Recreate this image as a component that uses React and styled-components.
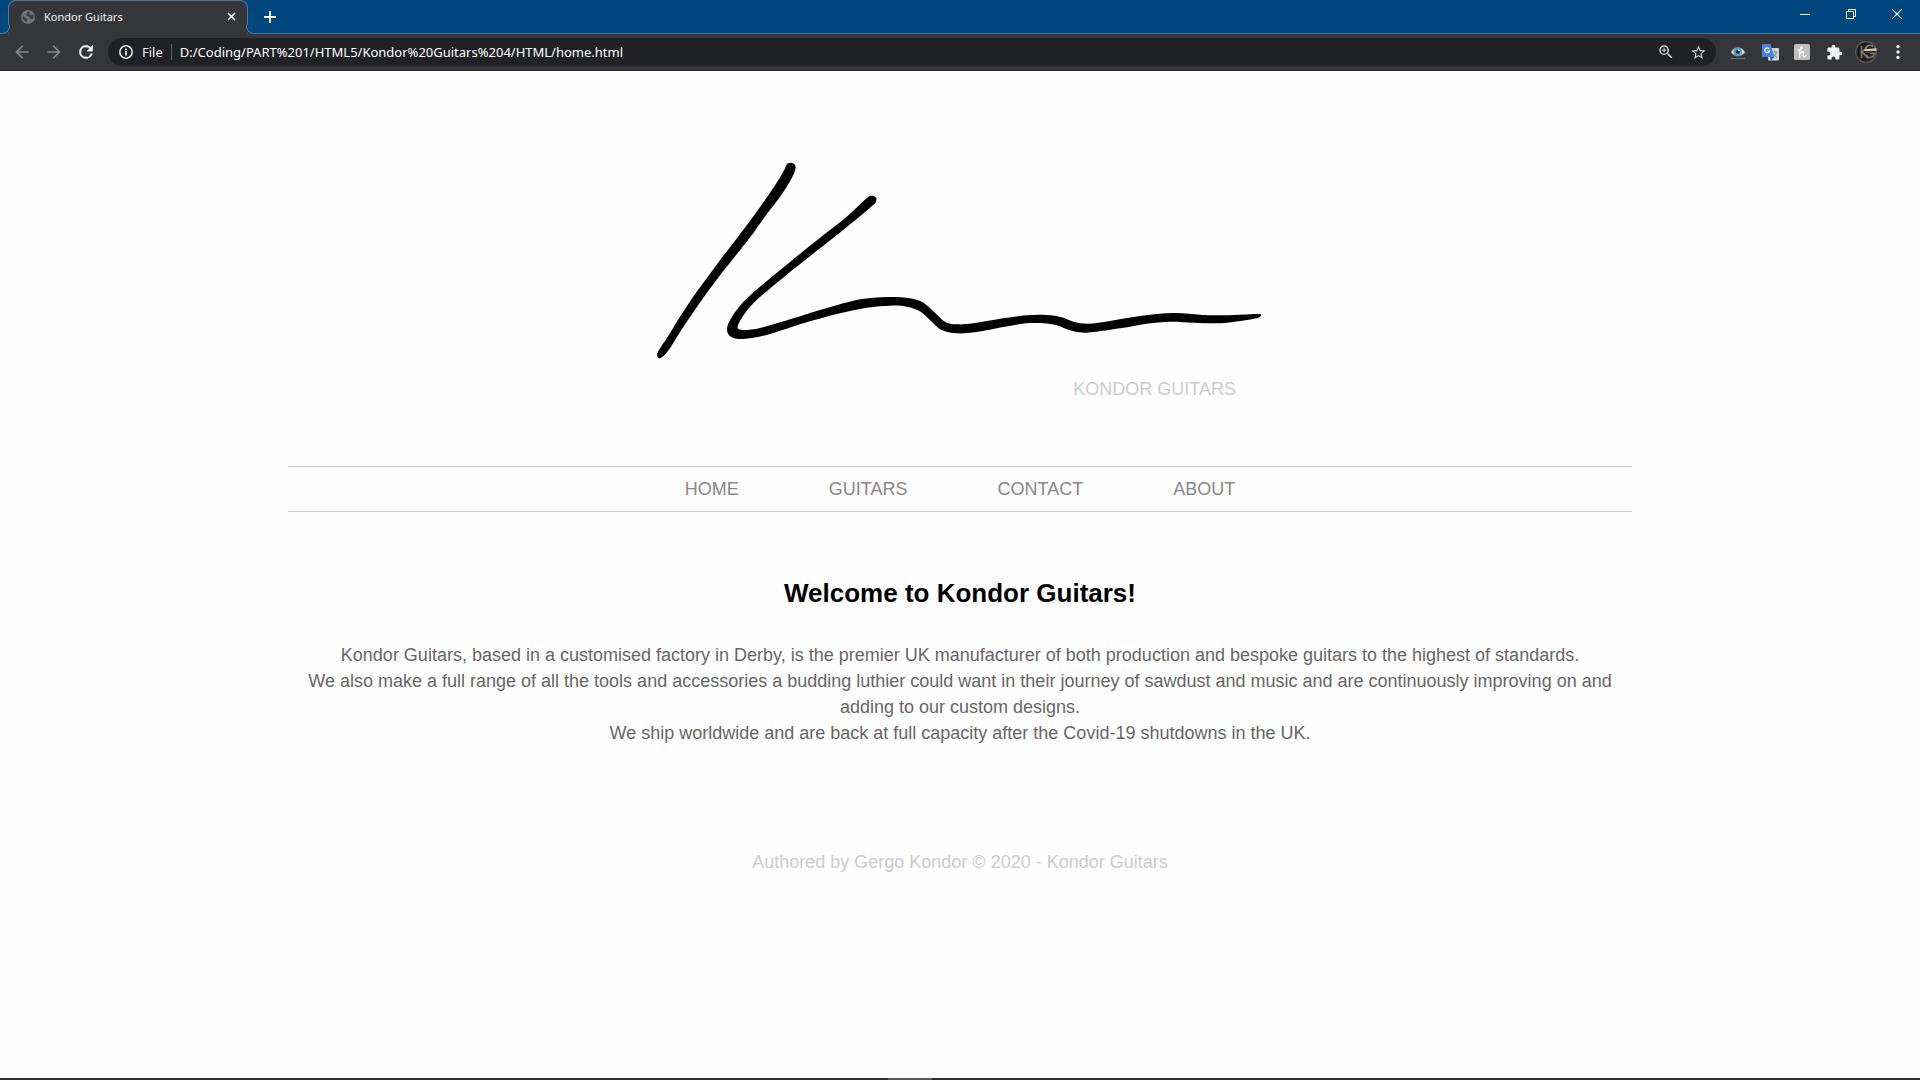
import React from 'react';
import styled, { createGlobalStyle } from 'styled-components';

const GlobalStyle = createGlobalStyle`
  * { box-sizing: border-box; }
  body { margin: 0; background: #fefefe; font-family: "Liberation Sans", Arial, sans-serif; }
  h1, h2, p, ul { margin: 0; padding: 0; }
  button { padding: 0; border: 0; background: none; color: inherit; font: inherit; }
  svg { display: block; }
`;

const Window = styled.div`
  display: flex;
  flex-direction: column;
  min-height: 100vh;
`;

const Chrome = styled.header`
  font-family: "Noto Sans", "Open Sans", sans-serif;
  color: #f1f3f4;
`;

const TabStrip = styled.div`
  display: flex;
  height: 34px;
  padding-left: 8px;
  background: #00467f;
  border-bottom: 1px solid #4c7a9f;
`;

const Tab = styled.div`
  position: relative;
  display: flex;
  align-items: center;
  gap: 9px;
  width: 240px;
  height: 34px;
  padding: 0 10px 2px 12px;
  background: #35363a;
  border: 1px solid #4c7a9f;
  border-bottom: 0;
  border-radius: 8px 8px 0 0;

  &::before, &::after {
    content: "";
    position: absolute;
    bottom: 0;
    width: 8px;
    height: 8px;
    background: #00467f;
    border-bottom: 1px solid #4c7a9f;
  }
  &::before {
    left: -8px;
    border-right: 1px solid #4c7a9f;
    border-bottom-right-radius: 8px;
    box-shadow: 2px 1px 0 #35363a;
  }
  &::after {
    right: -8px;
    border-left: 1px solid #4c7a9f;
    border-bottom-left-radius: 8px;
    box-shadow: -2px 1px 0 #35363a;
  }
`;

const TabTitle = styled.span`
  flex: 1;
  font-size: 11px;
`;

const IconButton = styled.button`
  display: grid;
  place-items: center;
  width: ${(p) => p.$w || 32}px;
  height: ${(p) => p.$h || 36}px;
  color: ${(p) => p.$color || '#f1f3f4'};
`;

const WindowControls = styled.div`
  display: flex;
  margin-left: auto;
`;

const Toolbar = styled.div`
  display: flex;
  align-items: center;
  height: 37px;
  padding: 0 6px;
  background: #35363a;
  border-bottom: 1px solid #28292c;
`;

const Omnibox = styled.label`
  display: flex;
  flex: 1;
  align-items: center;
  height: 28px;
  margin: 0 6px;
  padding: 0 2px 0 11px;
  background: #202124;
  border-radius: 14px;
  font-size: 13px;
`;

const Scheme = styled.span`
  margin-left: 9px;
  padding-right: 8px;
  border-right: 1px solid #5f6368;
  line-height: 16px;
`;

const Url = styled.input`
  flex: 1;
  min-width: 0;
  padding: 0 0 0 8px;
  background: none;
  border: 0;
  outline: 0;
  color: #fff;
  font: inherit;
`;

const Page = styled.div`
  flex: 1;
  width: 70%;
  margin: 0 auto;
  color: #666;
  font-size: 18px;
  line-height: 26px;
  text-align: center;
`;

const Brand = styled.div`
  width: 640px;
  margin: 0 auto;
  padding-top: 69px;
`;

const BrandName = styled.h1`
  margin-top: -24px;
  padding-right: 44px;
  color: #ccc;
  font-size: 18px;
  font-weight: 400;
  line-height: 26px;
  text-align: right;
`;

const Nav = styled.nav`
  margin-top: 64px;
  border: solid #ccc;
  border-width: 1px 0;
`;

const NavList = styled.ul`
  display: flex;
  justify-content: center;
  gap: 90px;
  padding: 9px 0;
  list-style: none;
`;

const NavLink = styled.a`
  color: #888;
  text-decoration: none;
`;

const Welcome = styled.h2`
  margin-top: 65px;
  color: #000;
  font-size: 26px;
  line-height: 32px;
`;

const Intro = styled.p`
  margin-top: 33px;
  padding: 0 20px;
`;

const Credit = styled.footer`
  margin-top: 103px;
  color: #ccc;
`;

const Taskbar = styled.div`
  display: flex;
  justify-content: center;
  height: 2px;
  padding-right: 100px;
  background: #2d2b2c;
`;

const TaskbarActive = styled.div`
  width: 44px;
  background: #5c5a5b;
`;

const Glyph = ({ size = 20, box = 24, children, ...rest }) => (
  <svg width={size} height={size} viewBox={`0 0 ${box} ${box}`} fill="none" aria-hidden="true" {...rest}>
    {children}
  </svg>
);

const Globe = () => (
  <Glyph size={14} box={14}>
    <circle cx="7" cy="7" r="7" fill="#74777a" />
    <path d="M2 5.500 4 8 6.500 8.500 6 12 3.500 11 1.500 8ZM6 2 9 1.800 8 4 10 5 12.500 4.500 12.600 8 10 9.500 8.500 7 5.500 6Z" fill="#3d3e42" />
  </Glyph>
);

const BackArrow = ({ flip }) => (
  <Glyph transform={flip ? 'scale(-1 1)' : undefined}>
    <path d="M20 11H7.830l5.590-5.590L12 4l-8 8 8 8 1.410-1.410L7.830 13H20z" fill="currentColor" />
  </Glyph>
);

const Reload = () => (
  <Glyph>
    <path d="M17.650 6.350A8 8 0 1 0 19.730 14h-2.080A6 6 0 1 1 12 6c1.660 0 3.140.690 4.220 1.780L13 11h7V4z" fill="currentColor" stroke="currentColor" strokeWidth=".5" />
  </Glyph>
);

const Info = () => (
  <Glyph size={14} box={14}>
    <circle cx="7" cy="7" r="6.200" stroke="#e8eaed" strokeWidth="1.500" />
    <path d="M7 6v4.500M7 3.400V5" stroke="#e8eaed" strokeWidth="1.700" />
  </Glyph>
);

const Magnifier = () => (
  <Glyph size={18}>
    <path d="M15.500 14h-.79l-.28-.27A6.470 6.470 0 0 0 16 9.500 6.500 6.500 0 1 0 9.500 16c1.610 0 3.090-.59 4.230-1.570l.27.28v.79l5 4.990L20.490 19zm-6 0a4.500 4.500 0 1 1 0-9 4.500 4.500 0 0 1 0 9zM10.200 7H8.800v1.800H7v1.400h1.800V12h1.400v-1.800H12V8.800h-1.800z" fill="#d3d5d8" />
  </Glyph>
);

const Star = () => (
  <Glyph size={17}>
    <path d="m22 9.240-7.190-.62L12 2 9.190 8.630 2 9.240l5.460 4.730L5.820 21 12 17.270 18.180 21l-1.630-7.030zM12 15.400l-3.760 2.270 1-4.280-3.320-2.880 4.380-.38L12 6.100l1.710 4.040 4.380.38-3.320 2.880 1 4.280z" fill="#d3d5d8" />
  </Glyph>
);

const Eye = () => (
  <Glyph size={16} box={16}>
    <path d="M1 8.300C3 2.600 12 1.700 15 8.300 12 13 4 13 1 8.300Z" fill="#ddd8d3" stroke="#9b8d82" strokeWidth=".7" />
    <circle cx="7.800" cy="7.800" r="4.300" fill="#4ba6cc" />
    <circle cx="7.800" cy="7.800" r="2" fill="#12232e" />
    <circle cx="9" cy="6.300" r=".9" fill="#fff" />
    <path d="M1 14.500h14" stroke="#77736f" />
  </Glyph>
);

const Translate = () => (
  <Glyph size={17} box={17}>
    <rect x="6" y="4" width="11" height="12.500" rx="1" fill="#d2d4d5" />
    <path d="M9.500 8h6M12.500 6.500V8M14.500 8c-.5 2.500-2 4-4 5M11 9.500c.8 1.800 2 3 3.800 3.800" stroke="#78909c" strokeWidth="1.100" />
    <path d="M8 13h4l-3 3.500Z" fill="#2850a7" />
    <path d="M1 0h7.500L12 13H1q-1 0-1-1V1q0-1 1-1Z" fill="#4683ea" />
    <path d="M7.200 4.900A2.400 2.400 0 1 0 7.500 7H5.300" stroke="#fff" strokeWidth="1.200" />
  </Glyph>
);

const Honey = () => (
  <Glyph size={16} box={16}>
    <rect width="16" height="16" rx="1.500" fill="#bebebe" />
    <path d="M4.200 6.200C6.500 6.300 8.300 4.600 8 3.100 7.300 1.900 6.100 4 5.900 7L5.700 13M5.800 10.500C7 7.500 9.600 6.800 9.500 8.800 9.300 11 8.700 12.900 10.200 12.900 11.100 12.800 11.700 11.900 12.100 11.200" stroke="#fff" strokeWidth="1.300" strokeLinecap="round" />
  </Glyph>
);

const Puzzle = () => (
  <Glyph size={17}>
    <path d="M20.500 11H19V7a2 2 0 0 0-2-2h-4V3.500a2.500 2.500 0 0 0-5 0V5H4a2 2 0 0 0-2 2v3.800h1.500a2.700 2.700 0 0 1 0 5.400H2V20a2 2 0 0 0 2 2h3.800v-1.500a2.700 2.700 0 0 1 5.400 0V22H17a2 2 0 0 0 2-2v-4h1.500a2.500 2.500 0 0 0 0-5z" fill="#f1f3f4" />
  </Glyph>
);

const Avatar = () => (
  <Glyph size={22} box={22}>
    <circle cx="11" cy="11" r="10.300" fill="#1d1d1d" stroke="#5d5d5d" strokeWidth="1.200" />
    <path d="M6.500 5v12M13 5 7.500 11 13 17.500" stroke="#777" strokeWidth="1.700" />
    <path d="M18 5.500C13.500 2.500 10 6 10.500 9M11 13.500C13 18 18.500 17.500 19.500 12.500H15" stroke="#777" strokeWidth="1.600" />
    <path d="M9.500 8.200 21.500 7.200V9.700L9.500 10Z" fill="#ead2b0" />
    <path d="M10 11.300H21" stroke="#555" />
  </Glyph>
);

const Dots = () => (
  <Glyph size={16} box={16}>
    <circle cx="8" cy="2.600" r="1.700" fill="#f1f3f4" />
    <circle cx="8" cy="8" r="1.700" fill="#f1f3f4" />
    <circle cx="8" cy="13.400" r="1.700" fill="#f1f3f4" />
  </Glyph>
);

// Outline of the long pen stroke, clockwise from its top end.
const LONG_STROKE = [
  [696, 167], [708, 173], [708, 185], [697, 197], [640, 245], [540, 325], [440, 404], [350, 480],
  [315, 520], [294, 556], [297, 568], [315, 570], [340, 568], [390, 556], [470, 532], [540, 510],
  [640, 482], [700, 473], [755, 471], [810, 475], [850, 488], [885, 518], [915, 545], [950, 553],
  [1000, 550], [1090, 535], [1160, 526], [1220, 525], [1265, 532], [1300, 545], [1345, 551],
  [1410, 543], [1500, 528], [1600, 519], [1680, 524], [1730, 526], [1800, 524], [1856, 522],
  [1862, 527], [1848, 535], [1780, 546], [1730, 550], [1660, 548], [1590, 545], [1520, 551],
  [1440, 565], [1340, 578], [1290, 571], [1250, 556], [1210, 550], [1160, 550], [1090, 561],
  [1010, 576], [950, 580], [905, 570], [875, 545], [842, 515], [800, 500], [750, 497], [680, 503],
  [590, 522], [490, 550], [390, 582], [330, 595], [290, 596], [266, 584], [262, 560], [276, 530],
  [310, 486], [360, 440], [440, 374], [540, 293], [620, 230], [678, 176],
];

const outline = (points) => {
  const at = (i) => points[(i + points.length) % points.length];
  const bend = (from, near, to, side) => near.map((v, k) => v + (side * (to[k] - from[k])) / 6);
  const curves = points.map((p, i) => {
    const next = at(i + 1);
    return `C${bend(at(i - 1), p, next, 1)} ${bend(p, next, at(i + 2), -1)} ${next}`;
  });
  return `M${points[0]}${curves.join('')}Z`;
};

const Signature = () => (
  <svg width="640" height="260" viewBox="0 0 1920 780" role="img" aria-label="Kondor signature">
    <path d="M438 78C442 65 464 64 467 81C468 94 452 121 436 147C410 187 380 220 343 275C302 330 252 388 213 442C172 497 130 560 98 612C80 640 75 646 62 654C54 658 49 648 52 640C60 622 75 605 90 580C120 528 160 468 200 415C250 345 300 285 350 215C390 160 425 110 438 78Z" />
    <path d={outline(LONG_STROKE)} />
  </svg>
);

const LINKS = ['Home', 'Guitars', 'Contact', 'About'];

const EXTENSIONS = [
  { label: 'Eye extension', icon: <Eye /> },
  { label: 'Translate', icon: <Translate /> },
  { label: 'Honey', icon: <Honey /> },
  { label: 'Extensions', icon: <Puzzle /> },
  { label: 'Profile', icon: <Avatar /> },
  { label: 'Menu', icon: <Dots /> },
];

export default function App() {
  return (
    <Window>
      <GlobalStyle />
      <Chrome>
        <TabStrip>
          <Tab>
            <Globe />
            <TabTitle>Kondor Guitars</TabTitle>
            <IconButton $w={12} $h={32} aria-label="Close tab">
              <Glyph size={9} box={9}><path d="m1 1 7 7M8 1 1 8" stroke="#fff" strokeWidth="1.600" /></Glyph>
            </IconButton>
          </Tab>
          <IconButton $w={44} $h={34} aria-label="New tab">
            <Glyph size={12} box={12}><path d="M6 0v12M0 6h12" stroke="#fff" strokeWidth="1.800" /></Glyph>
          </IconButton>
          <WindowControls>
            <IconButton $w={46} $h={28} aria-label="Minimize">
              <Glyph size={10} box={10}><path d="M0 5.500h10" stroke="#fff" /></Glyph>
            </IconButton>
            <IconButton $w={46} $h={28} aria-label="Restore">
              <Glyph size={10} box={10}><path d="M.5 2.500h7v7h-7zM2.500 2.500v-2h7v7h-2" stroke="#fff" /></Glyph>
            </IconButton>
            <IconButton $w={46} $h={28} aria-label="Close window">
              <Glyph size={10} box={10}><path d="m0 0 10 10M10 0 0 10" stroke="#fff" strokeWidth="1.100" /></Glyph>
            </IconButton>
          </WindowControls>
        </TabStrip>
        <Toolbar>
          <IconButton $color="#85878a" aria-label="Back"><BackArrow /></IconButton>
          <IconButton $color="#85878a" aria-label="Forward"><BackArrow flip /></IconButton>
          <IconButton aria-label="Reload"><Reload /></IconButton>
          <Omnibox>
            <Info />
            <Scheme>File</Scheme>
            <Url aria-label="Address" defaultValue="D:/Coding/PART%201/HTML5/Kondor%20Guitars%204/HTML/home.html" />
            <IconButton $h={28} aria-label="Zoom"><Magnifier /></IconButton>
            <IconButton $h={28} aria-label="Bookmark"><Star /></IconButton>
          </Omnibox>
          {EXTENSIONS.map((e) => (
            <IconButton key={e.label} aria-label={e.label}>{e.icon}</IconButton>
          ))}
        </Toolbar>
      </Chrome>
      <Page>
        <Brand>
          <Signature />
          <BrandName>KONDOR GUITARS</BrandName>
        </Brand>
        <Nav>
          <NavList>
            {LINKS.map((name) => (
              <li key={name}><NavLink href={`#${name.toLowerCase()}`}>{name.toUpperCase()}</NavLink></li>
            ))}
          </NavList>
        </Nav>
        <main>
          <Welcome>Welcome to Kondor Guitars!</Welcome>
          <Intro>
            Kondor Guitars, based in a customised factory in Derby, is the premier UK manufacturer of both production and bespoke guitars to the highest of standards.
            <br />
            We also make a full range of all the tools and accessories a budding luthier could want in their journey of sawdust and music and are continuously improving on and adding to our custom designs.
            <br />
            We ship worldwide and are back at full capacity after the Covid-19 shutdowns in the UK.
          </Intro>
        </main>
        <Credit>Authored by Gergo Kondor © 2020 - Kondor Guitars</Credit>
      </Page>
      <Taskbar><TaskbarActive /></Taskbar>
    </Window>
  );
}
